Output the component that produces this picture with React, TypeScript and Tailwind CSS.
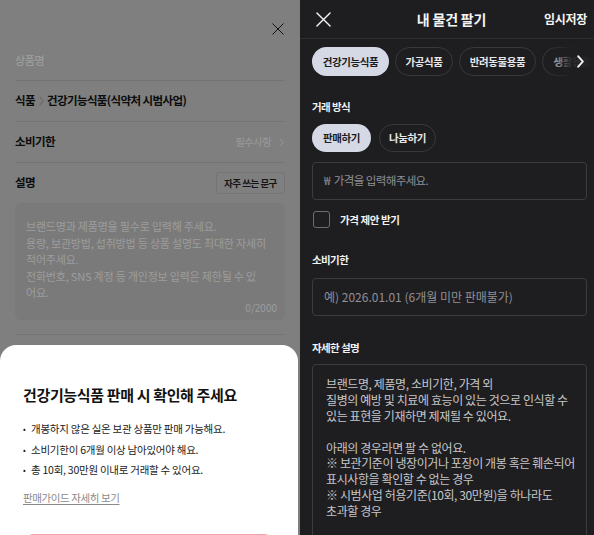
import React from 'react';

const XIcon: React.FC<{ size: number; color: string; stroke?: number }> = ({ size, color, stroke = 1.4 }) => (
  <svg width={size} height={size} viewBox="0 0 16 16" fill="none">
    <path d="M1 1L15 15M15 1L1 15" stroke={color} strokeWidth={stroke} strokeLinecap="round" />
  </svg>
);

const Chevron: React.FC<{ color: string; w?: number; h?: number; stroke?: number }> = ({ color, w = 6, h = 10, stroke = 1.2 }) => (
  <svg width={w} height={h} viewBox="0 0 6 10" fill="none" preserveAspectRatio="none">
    <path d="M1 1L5 5L1 9" stroke={color} strokeWidth={stroke} strokeLinecap="round" strokeLinejoin="round" />
  </svg>
);

const leftHint = [
  '브랜드명과 제품명을 필수로 입력해 주세요.',
  '용량, 보관방법, 섭취방법 등 상품 설명도 최대한 자세히',
  '적어주세요.',
  '전화번호, SNS 계정 등 개인정보 입력은 제한될 수 있',
  '어요.',
];

const bullets = [
  '개봉하지 않은 실온 보관 상품만 판매 가능해요.',
  '소비기한이 6개월 이상 남아있어야 해요.',
  '총 10회, 30만원 이내로 거래할 수 있어요.',
];

const rightHint = [
  '브랜드명, 제품명, 소비기한, 가격 외',
  '질병의 예방 및 치료에 효능이 있는 것으로 인식할 수',
  '있는 표현을 기재하면 제재될 수 있어요.',
  '',
  '아래의 경우라면 팔 수 없어요.',
  '※ 보관기준이 냉장이거나 포장이 개봉 혹은 훼손되어',
  '표시사항을 확인할 수 없는 경우',
  '※ 시범사업 허용기준(10회, 30만원)을 하나라도',
  '초과할 경우',
];

const LeftScreen: React.FC = () => (
  <div className="relative w-[300px] h-[535px] shrink-0 bg-[#7f7f7f] overflow-hidden">
    <div className="h-[40px] flex items-start justify-end pt-[23px] pr-[16px]">
      <XIcon size={12} color="#111" stroke={1.3} />
    </div>

    <div className="px-[15px]">
      <div className="h-[41px] flex items-center border-b border-[#737373] text-[11px] tracking-[-0.4px] text-[#a3a3a3]">
        상품명
      </div>
      <div className="h-[41px] flex items-center border-b border-[#737373] text-[11.5px] font-bold tracking-[-0.6px] text-[#0c0c0c]">
        <span>식품</span>
        <span className="ml-[4px] mr-[3px] flex items-center">
          <Chevron color="#6a6a6a" w={5} h={10} stroke={1.1} />
        </span>
        <span>건강기능식품(식약처 시범사업)</span>
      </div>
      <div className="h-[41px] flex items-center justify-between border-b border-[#737373]">
        <span className="text-[11.5px] font-bold tracking-[-0.6px] text-[#0c0c0c]">소비기한</span>
        <span className="flex items-center gap-[8px] pr-[1px] text-[10.5px] tracking-[-0.7px] text-[#9a9a9a]">
          필수사항 <Chevron color="#9a9a9a" w={5} h={9} stroke={1} />
        </span>
      </div>

      <div className="pt-[9px] pb-[14px] border-b border-[#737373]">
        <div className="flex items-center justify-between">
          <span className="text-[11.5px] font-bold tracking-[-0.6px] text-[#0c0c0c]">설명</span>
          <span className="h-[22px] w-[69px] flex items-center justify-center rounded-[3px] border border-[#747474] text-[9.5px] font-bold tracking-[-0.5px] text-[#151515]">
            자주 쓰는 문구
          </span>
        </div>
        <div className="mt-[9px] h-[117px] rounded-[6px] bg-[#7a7a7a] pl-[11px] pr-[8px] pt-[15px] pb-[6px] flex flex-col">
          {leftHint.map((l, i) => (
            <p key={i} className="whitespace-nowrap text-[11px] leading-[16.5px] tracking-[-0.2px] text-[#9d9d9d]">
              {l}
            </p>
          ))}
          <span className="mt-auto self-end text-[10px] leading-[13px] text-[#9d9d9d]">0/2000</span>
        </div>
      </div>
    </div>

    <div className="absolute left-0 top-[345px] w-[298px] h-[200px] bg-white rounded-t-[16px] px-[23px] pt-[41px]">
      <h2 className="text-[15px] leading-[18px] font-bold tracking-[-0.35px] text-[#111]">
        건강기능식품 판매 시 확인해 주세요
      </h2>
      <ul className="mt-[18px] flex flex-col gap-[6.5px]">
        {bullets.map(b => (
          <li key={b} className="flex items-center text-[10.5px] leading-[14px] tracking-[-0.25px] text-[#1a1a1a]">
            <span className="w-[8px] shrink-0 text-[8px]">•</span>
            {b}
          </li>
        ))}
      </ul>
      <div className="mt-[14px] text-[10.5px] leading-[14px] tracking-[-0.4px] text-[#8a8a8a] underline underline-offset-2">
        판매가이드 자세히 보기
      </div>
      <div className="mt-[29px] mx-[4px] h-[40px] rounded-[6px] border border-[#f3a2aa] bg-white" />
    </div>
  </div>
);

const Pill: React.FC<{ label: string; active?: boolean; w: number }> = ({ label, active, w }) => (
  <span
    style={{ width: w }}
    className={`shrink-0 h-full flex items-center justify-center rounded-full text-[10.5px] font-bold tracking-[-0.4px] ${
      active ? 'bg-[#d5d9e5] text-[#1c1c20]' : 'border border-[#38383d] text-[#e8e8ea]'
    }`}
  >
    {label}
  </span>
);

const FieldLabel: React.FC<{ children: React.ReactNode; className?: string }> = ({ children, className }) => (
  <div className={`text-[10.5px] leading-[14px] font-bold tracking-[-0.6px] text-[#f2f2f2] ${className ?? ''}`}>{children}</div>
);

const RightScreen: React.FC = () => (
  <div className="w-[294px] h-[535px] shrink-0 bg-[#1e1e21] overflow-hidden">
    <div className="h-[39px] grid grid-cols-[1fr_auto_1fr] items-center pl-[16px] pr-[7px] border-b border-[#2e2e32]">
      <XIcon size={15} color="#f2f2f2" stroke={1.5} />
      <span className="text-[14px] font-bold tracking-[-0.2px] text-[#f4f4f4]">내 물건 팔기</span>
      <span className="justify-self-end text-[12px] font-bold tracking-[-0.3px] text-[#f4f4f4]">임시저장</span>
    </div>

    <div className="relative mt-[8px] h-[29px] pl-[12px] flex gap-[6px] overflow-hidden">
      <Pill label="건강기능식품" active w={77} />
      <Pill label="가공식품" w={58} />
      <Pill label="반려동물용품" w={77} />
      <Pill label="생활용품" w={60} />
      <div className="absolute right-0 top-0 h-full w-[48px] flex items-center justify-end pr-[10px] bg-gradient-to-r from-transparent via-[#1e1e21]/90 to-[#1e1e21]">
        <Chevron color="#f2f2f2" w={7} h={13} stroke={1.5} />
      </div>
    </div>

    <div className="pl-[12px] pr-[7px]">
      <FieldLabel className="mt-[24px]">거래 방식</FieldLabel>
      <div className="mt-[10px] h-[28px] flex gap-[8px]">
        <Pill label="판매하기" active w={59} />
        <Pill label="나눔하기" w={57} />
      </div>

      <div className="mt-[10px] h-[38px] rounded-[4px] border border-[#3b3b40] flex items-center pl-[11px] text-[11.5px] tracking-[-0.6px] text-[#8f8f94]">
        <span className="mr-[4px]">₩</span>가격을 입력해주세요.
      </div>

      <div className="mt-[11px] flex items-center gap-[10px] pl-[1px]">
        <span className="w-[17px] h-[17px] rounded-[3px] border border-[#6b6b70]" />
        <span className="text-[10.5px] font-bold tracking-[-0.4px] text-[#f2f2f2]">가격 제안 받기</span>
      </div>

      <FieldLabel className="mt-[25px]">소비기한</FieldLabel>
      <div className="mt-[11px] h-[38px] rounded-[4px] border border-[#3b3b40] flex items-center pl-[11px] text-[12px] text-[#8f8f94]">
        예) 2026.01.01 (6개월 미만 판매불가)
      </div>

      <FieldLabel className="mt-[25px]">자세한 설명</FieldLabel>
      <div className="mt-[9px] h-[200px] rounded-[4px] border border-[#3b3b40] pl-[13px] pr-[8px] pt-[11px]">
        {rightHint.map((l, i) => (
          <p key={i} className="h-[15.9px] whitespace-nowrap text-[12px] leading-[15.9px] tracking-[-0.4px] text-[#c6c6c9]">
            {l}
          </p>
        ))}
      </div>
    </div>
  </div>
);

const App: React.FC = () => (
  <div className="w-[594px] h-[535px] flex overflow-hidden font-['Noto_Sans_CJK_KR','Noto_Sans',sans-serif]">
    <LeftScreen />
    <RightScreen />
  </div>
);

export default App;
